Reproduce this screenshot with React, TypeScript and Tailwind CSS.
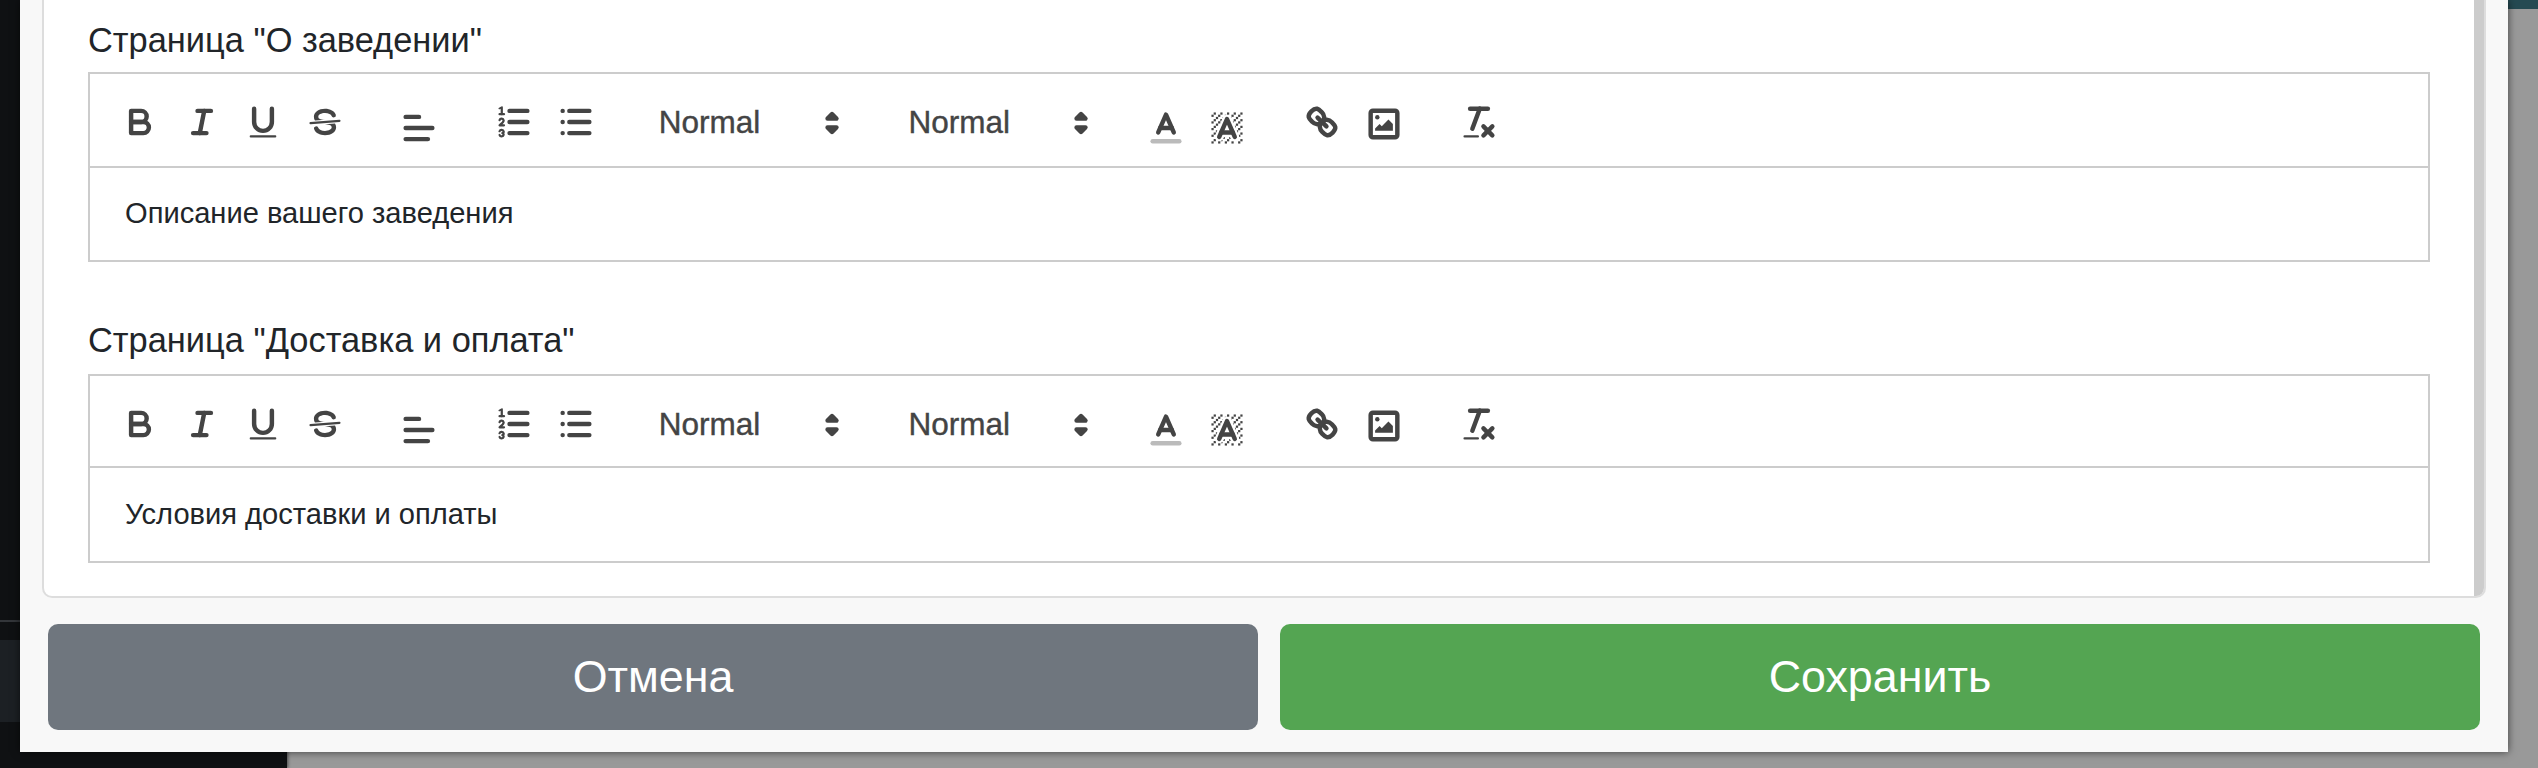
import React from "react";

const Ic = ({ children, cls = "" }: { children: React.ReactNode; cls?: string }) => (
  <svg viewBox="0 0 18 18" width={40} height={40} className={"block shrink-0 " + cls} fill="none" stroke="#444" strokeWidth={2} strokeLinecap="round" strokeLinejoin="round">
    {children}
  </svg>
);

const Btn = ({ children, cls = "" }: { children: React.ReactNode; cls?: string }) => (
  <div className={"w-[61.5px] shrink-0 flex justify-center " + cls}>{children}</div>
);

const Chevrons = () => (
  <svg viewBox="0 0 18 18" width={40} height={40} className="absolute right-[5px] top-[1px]">
    <polygon points="7 11 9 13 11 11 7 11" stroke="#444" strokeWidth={2} strokeLinejoin="round" fill="#444" />
    <polygon points="7 7 9 5 11 7 7 7" stroke="#444" strokeWidth={2} strokeLinejoin="round" fill="#444" />
  </svg>
);

function Picker({ cls }: { cls: string }) {
  return (
    <div className={"relative w-[215.6px] h-[42px] shrink-0 pl-[17.6px] flex items-center " + cls}>
      <span className="text-[31.5px] leading-none text-[#444] [-webkit-text-stroke:0.4px_#444]">Normal</span>
      <Chevrons />
    </div>
  );
}

const BgCells = () => (
  <g fill="#444" stroke="none">
    <polygon points="6 6.868 6 6 5 6 5 7 5.942 7 6 6.868" /><rect height="1" width="1" x="4" y="4" /><polygon points="6.817 5 6 5 6 6 6.38 6 6.817 5" /><rect height="1" width="1" x="2" y="6" /><rect height="1" width="1" x="3" y="5" /><rect height="1" width="1" x="4" y="7" /><polygon points="4 11.439 4 11 3 11 3 12 3.755 12 4 11.439" /><rect height="1" width="1" x="2" y="12" /><rect height="1" width="1" x="2" y="9" /><rect height="1" width="1" x="2" y="15" /><polygon points="4.63 10 4 10 4 11 4.192 11 4.63 10" /><rect height="1" width="1" x="3" y="8" /><path d="M10.832,4.2L11,4.582V4H10.708A1.948,1.948,0,0,1,10.832,4.2Z" /><path d="M7,4.582L7.168,4.2A1.929,1.929,0,0,1,7.292,4H7V4.582Z" /><path d="M8,13H7.683l-0.351.8a1.933,1.933,0,0,1-.124.2H8V13Z" /><rect height="1" width="1" x="12" y="2" /><rect height="1" width="1" x="11" y="3" /><path d="M9,3H8V3.282A1.985,1.985,0,0,1,9,3Z" /><rect height="1" width="1" x="2" y="3" /><rect height="1" width="1" x="6" y="2" /><rect height="1" width="1" x="3" y="2" /><rect height="1" width="1" x="5" y="3" /><rect height="1" width="1" x="9" y="2" /><rect height="1" width="1" x="15" y="14" /><polygon points="13.447 10.174 13.469 10.225 13.472 10.232 13.808 11 14 11 14 10 13.37 10 13.447 10.174" /><rect height="1" width="1" x="13" y="7" /><rect height="1" width="1" x="15" y="5" /><rect height="1" width="1" x="14" y="6" /><rect height="1" width="1" x="15" y="8" /><rect height="1" width="1" x="14" y="9" /><path d="M3.775,14H3v1H4V14.314A1.97,1.97,0,0,1,3.775,14Z" /><rect height="1" width="1" x="14" y="3" /><polygon points="12 6.868 12 6 11.62 6 12 6.868" /><rect height="1" width="1" x="15" y="2" /><rect height="1" width="1" x="12" y="5" /><rect height="1" width="1" x="13" y="4" /><polygon points="12.933 9 13 9 13 8 12.495 8 12.933 9" /><rect height="1" width="1" x="9" y="14" /><rect height="1" width="1" x="8" y="15" /><path d="M6,14.926V15H7V14.316A1.993,1.993,0,0,1,6,14.926Z" /><rect height="1" width="1" x="5" y="15" /><path d="M10.668,13.8L10.317,13H10v1h0.792A1.947,1.947,0,0,1,10.668,13.8Z" /><rect height="1" width="1" x="11" y="15" /><path d="M14.332,12.2a1.99,1.99,0,0,1,.166.8H15V12H14.245Z" /><rect height="1" width="1" x="14" y="15" /><rect height="1" width="1" x="15" y="11" />
  </g>
);

function Toolbar({ h }: { h: string }) {
  return (
    <div className={h + " border-b-2 border-[#ccc] flex items-start pt-[28px] pl-[19.25px] shrink-0"}>
      <Btn><Ic><path d="M5,4H9.5A2.5,2.5,0,0,1,12,6.5v0A2.5,2.5,0,0,1,9.5,9H5A0,0,0,0,1,5,9V4A0,0,0,0,1,5,4Z" /><path d="M5,9h5.5A2.5,2.5,0,0,1,13,11.5v0A2.5,2.5,0,0,1,10.5,14H5a0,0,0,0,1,0,0V9A0,0,0,0,1,5,9Z" /></Ic></Btn>
      <Btn><Ic><line x1="7" x2="13" y1="4" y2="4" /><line x1="5" x2="11" y1="14" y2="14" /><line x1="8" x2="10" y1="14" y2="4" /></Ic></Btn>
      <Btn><Ic><path d="M5,3V9a4.012,4.012,0,0,0,4,4H9a4.012,4.012,0,0,0,4-4V3" /><rect x="3" y="15" width="12" height="1" rx="0.5" ry="0.5" fill="#444" stroke="none" /></Ic></Btn>
      <Btn><Ic><line x1="15.5" x2="2.5" y1="8.5" y2="9.5" strokeWidth={1} /><path fill="#444" stroke="none" d="M9.007,8C6.542,7.791,6,7.519,6,6.5,6,5.792,7.283,5,9,5c1.571,0,2.765.679,2.969,1.309a1,1,0,0,0,1.9-.617C13.356,4.106,11.354,3,9,3,6.2,3,4,4.538,4,6.5a3.2,3.2,0,0,0,.5,1.843Z" /><path fill="#444" stroke="none" d="M8.984,10C11.457,10.208,12,10.479,12,11.5c0,.708-1.283,1.5-3,1.5-1.571,0-2.765-.679-2.969-1.309a1,1,0,1,0-1.9.617C4.644,13.894,6.646,15,9,15c2.8,0,5-1.538,5-3.5a3.2,3.2,0,0,0-.5-1.843Z" /></Ic></Btn>

      <Btn cls="ml-[32.5px]"><Ic cls="mt-[6px]"><line x1="3" x2="15" y1="9" y2="9" /><line x1="3" x2="13" y1="14" y2="14" /><line x1="3" x2="9" y1="4" y2="4" /></Ic></Btn>

      <Btn cls="ml-[34px]"><Ic><line x1="7" x2="15" y1="4" y2="4" /><line x1="7" x2="15" y1="9" y2="9" /><line x1="7" x2="15" y1="14" y2="14" /><line x1="2.5" x2="4.5" y1="5.5" y2="5.5" strokeWidth={1} /><path fill="#444" stroke="none" d="M3.5,6A0.5,0.5,0,0,1,3,5.5V3.085l-0.276.138A0.5,0.5,0,0,1,2.053,3c-0.124-.247-0.023-0.324.224-0.447l1-.5A0.5,0.5,0,0,1,4,2.5v3A0.5,0.5,0,0,1,3.5,6Z" /><path strokeWidth={1} d="M4.5,10.5h-2c0-.234,1.85-1.076,1.85-2.234A0.959,0.959,0,0,0,2.5,8.156" /><path strokeWidth={1} d="M2.5,14.846a0.959,0.959,0,0,0,1.85-.109A0.7,0.7,0,0,0,3.75,14a0.688,0.688,0,0,0,.6-0.736,0.959,0.959,0,0,0-1.85-.109" /></Ic></Btn>
      <Btn><Ic><line x1="6" x2="15" y1="4" y2="4" /><line x1="6" x2="15" y1="9" y2="9" /><line x1="6" x2="15" y1="14" y2="14" /><line x1="3" x2="3" y1="4" y2="4" /><line x1="3" x2="3" y1="9" y2="9" /><line x1="3" x2="3" y1="14" y2="14" /></Ic></Btn>

      <Picker cls="ml-[35px]" />
      <Picker cls="ml-[34px]" />

      <Btn cls="ml-[28.6px]"><Ic cls="mt-[6px]"><line x1="3" x2="15" y1="15" y2="15" stroke="#bbb" /><polyline points="5.5 11 9 3 12.5 11" /><line x1="11.63" x2="6.38" y1="9" y2="9" /></Ic></Btn>
      <Btn><Ic cls="mt-[6px]"><BgCells /><polyline points="5.5 13 9 5 12.5 13" /><line x1="11.63" x2="6.38" y1="11" y2="11" /></Ic></Btn>

      <Btn cls="ml-[33.5px]"><Ic><line x1="7" x2="11" y1="7" y2="11" /><path d="M8.9,4.577a3.476,3.476,0,0,1,.36,4.679A3.476,3.476,0,0,1,4.577,8.9C3.185,7.5,2.035,6.4,4.217,4.217S7.5,3.185,8.9,4.577Z" /><path d="M13.423,9.1a3.476,3.476,0,0,0-4.679-.36,3.476,3.476,0,0,0,.36,4.679c1.392,1.392,2.5,2.542,4.679.36S14.815,10.5,13.423,9.1Z" /></Ic></Btn>
      <Btn><Ic cls="mt-[2px]"><rect x="3" y="3" width="12" height="12" rx="1" /><circle cx="6" cy="6" r="1" fill="#444" stroke="none" /><polyline points="5 12 5 11 7 9 8 10 11 7 13 9 13 12 5 12" fill="#444" stroke="none" /></Ic></Btn>

      <Btn cls="ml-[34px]"><Ic><line x1="5" x2="13" y1="3" y2="3" /><line x1="6" x2="9.35" y1="12" y2="3" /><line x1="11" x2="15" y1="11" y2="15" /><line x1="15" x2="11" y1="11" y2="15" /><rect x="2" y="15" width="7" height="1" rx="0.5" ry="0.5" fill="#444" stroke="none" /></Ic></Btn>
    </div>
  );
}

function Editor({ label, text, cls, gap, bar, body }: { label: string; text: string; cls: string; gap: string; bar: string; body: string }) {
  return (
    <div className={cls}>
      <div className="h-[40px] flex items-center text-[34.4px] leading-none text-[#212529]">{label}</div>
      <div className={gap + " border-2 border-[#ccc] bg-white flex flex-col"}>
        <Toolbar h={bar} />
        <div className={body + " flex items-center px-[35px] text-[29.1px] leading-none text-[#212529]"}>{text}</div>
      </div>
    </div>
  );
}

export default function App() {
  return (
    <div className="relative w-[2538px] h-[768px] overflow-hidden bg-[#999999] flex" style={{ fontFamily: '"Liberation Sans", Arial, sans-serif' }}>
      <div className="w-[287px] h-full shrink-0 bg-[#0f1113] flex flex-col shadow-[1px_0_3px_rgba(0,0,0,0.5)]">
        <div className="h-[620px] shrink-0" />
        <div className="h-[2px] bg-[#33363a] shrink-0" />
        <div className="h-[18px] shrink-0" />
        <div className="h-[82px] bg-[#1c2024] shrink-0" />
      </div>
      <div className="flex-1 flex flex-col">
        <div className="h-[9px] bg-[#254a52] shrink-0" />
      </div>
      <div className="absolute left-[20px] top-0 w-[2488px] h-[752px] bg-[#f8f8f8] flex flex-col shadow-[0_0_8px_rgba(0,0,0,0.6)]">
        <div className="ml-[22px] w-[2444px] h-[598px] shrink-0 bg-white border-2 border-t-0 border-[#ddd] rounded-b-[10px] flex overflow-hidden">
          <div className="flex-1 min-w-0 pl-[44px] pr-[44px] pt-[20px]">
            <Editor label={'Страница "О заведении"'} text="Описание вашего заведения" cls="" gap="mt-[12px]" bar="h-[94px]" body="h-[92px]" />
            <Editor label={'Страница "Доставка и оплата"'} text="Условия доставки и оплаты" cls="mt-[58px]" gap="mt-[14px]" bar="h-[92px]" body="h-[93px]" />
          </div>
          <div className="w-[10px] shrink-0 bg-[#ccc]" />
        </div>
        <div className="flex gap-[22px] ml-[28px] mt-[26px]">
          <button className="w-[1210px] h-[106px] bg-[#6f767e] rounded-[10px] text-white text-[44.8px]">Отмена</button>
          <button className="w-[1200px] h-[106px] bg-[#54a552] rounded-[10px] text-white text-[44.8px]">Сохранить</button>
        </div>
      </div>
    </div>
  );
}
